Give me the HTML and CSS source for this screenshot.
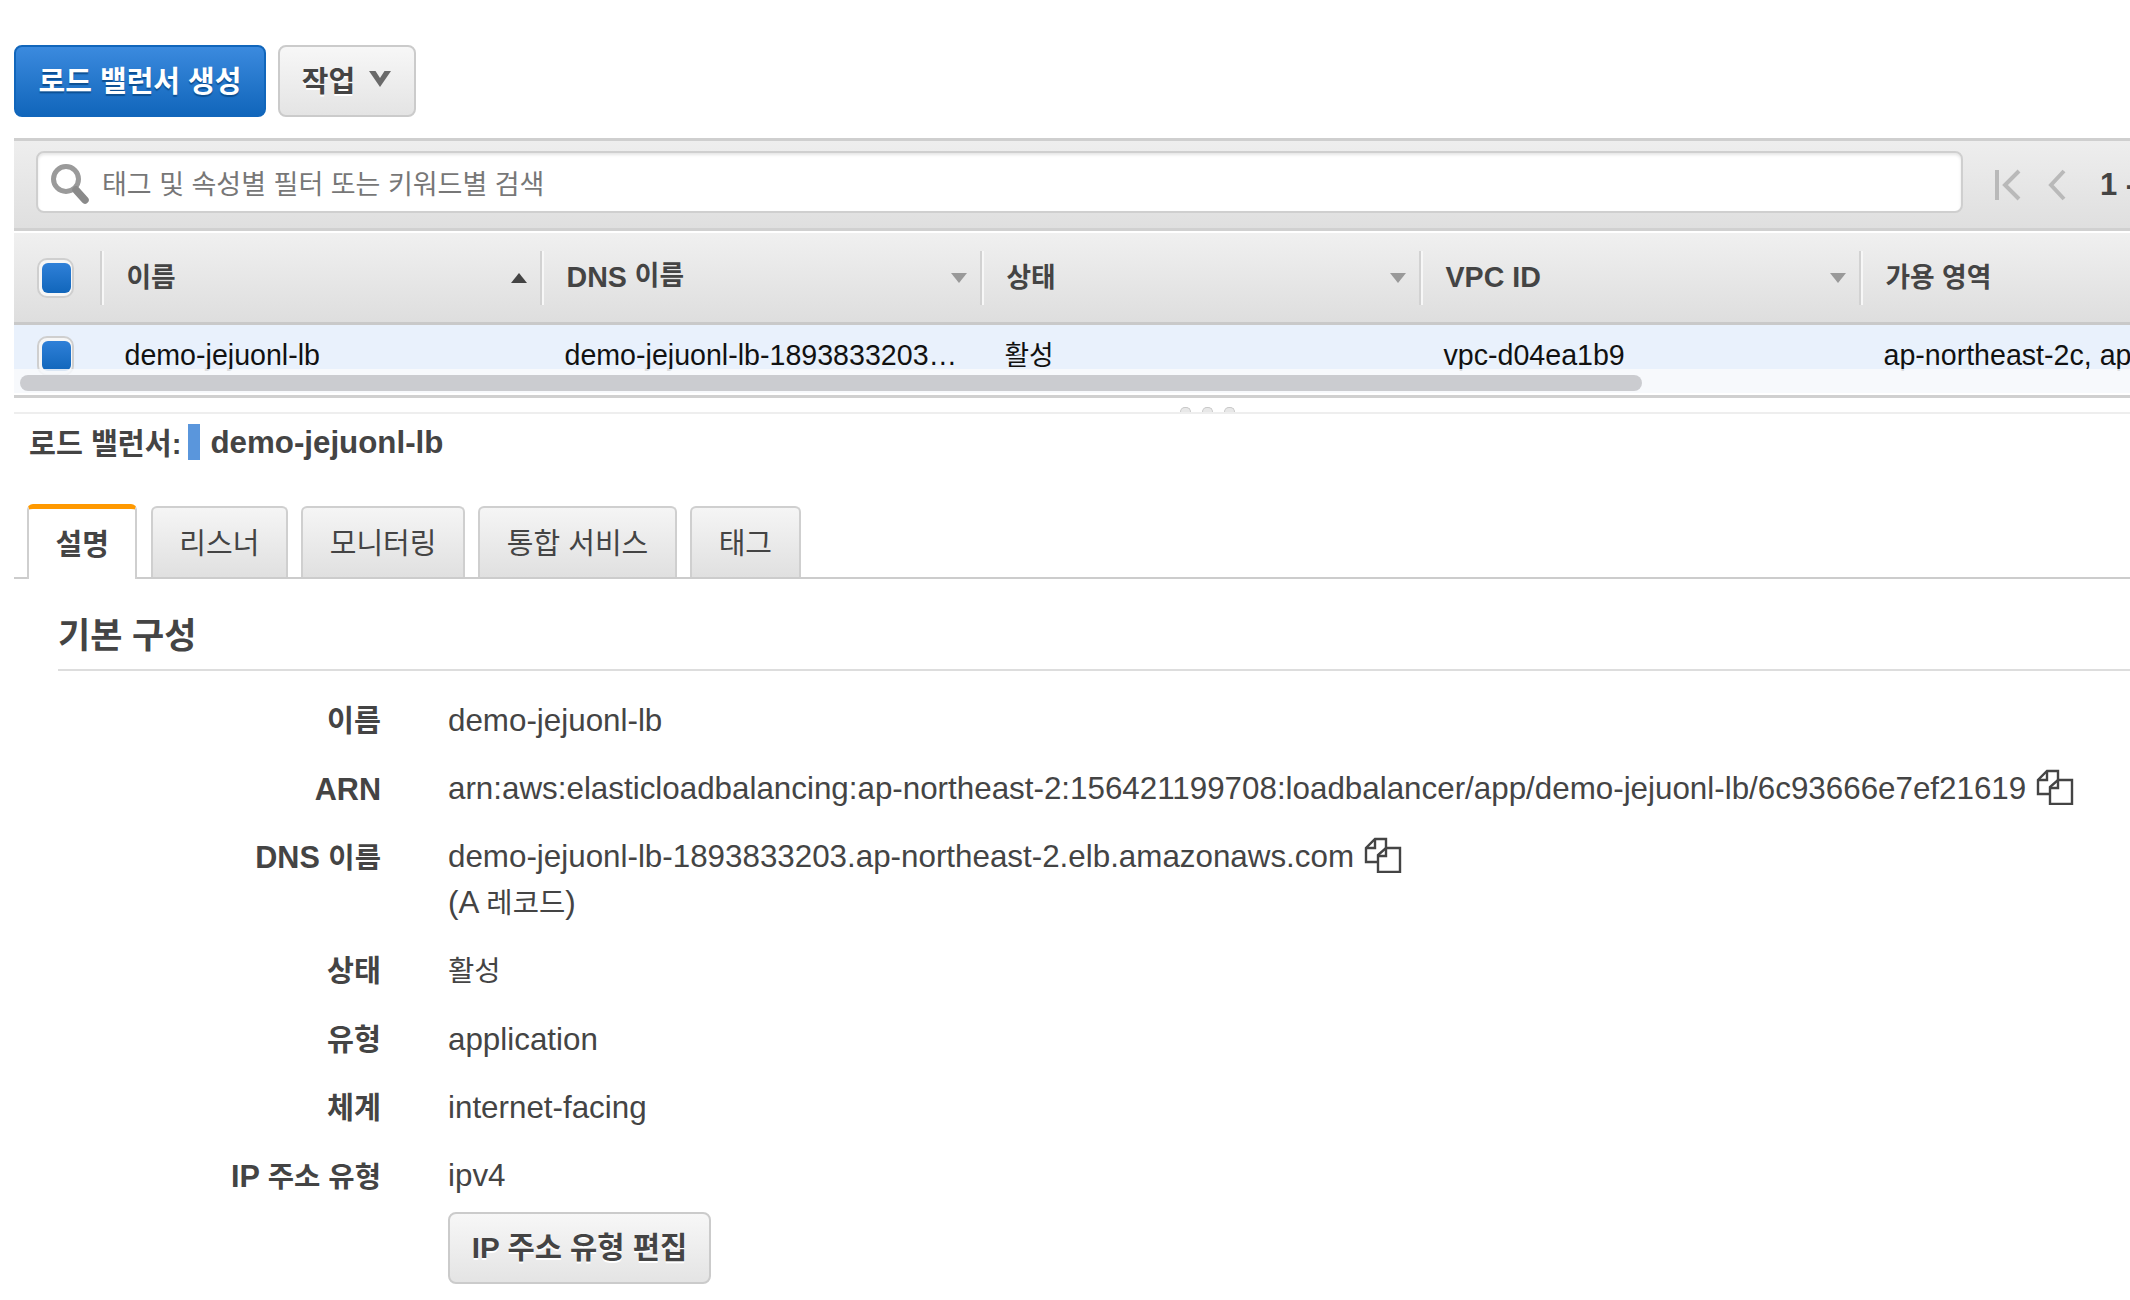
FILE: index.html
```html
<!DOCTYPE html>
<html lang="ko">
<head>
<meta charset="utf-8">
<title>로드 밸런서</title>
<link rel="stylesheet" href="styles.css">
</head>
<body>
<div class="page">
  <div class="actions">
    <button class="btn btn-primary">로드 밸런서 생성</button>
    <button class="btn btn-default btn-actions">작업
      <svg class="chev" width="24" height="18" viewBox="0 0 24 18"><path d="M1 1h6.500l4.500 7 4.500-7h6.500L12 17z" fill="#6a6a6a"/></svg>
    </button>
  </div>

  <div class="toolbar">
    <div class="search">
      <svg class="search-icon" width="40" height="42" viewBox="0 0 40 42"><circle cx="16" cy="16" r="12.5" fill="none" stroke="#9a9a9a" stroke-width="5"/><path d="M26 27l9 10" stroke="#8a8a8a" stroke-width="7.5" stroke-linecap="round"/></svg>
      <span class="placeholder">태그 및 속성별 필터 또는 키워드별 검색</span>
    </div>
    <div class="pager">
      <svg width="30" height="34" viewBox="0 0 30 34"><path d="M3 2v30" stroke="#b9b9b9" stroke-width="4"/><path d="M25 3L11 17l14 14" fill="none" stroke="#b9b9b9" stroke-width="4"/></svg>
      <svg width="20" height="34" viewBox="0 0 20 34"><path d="M16 3L3 17l13 14" fill="none" stroke="#b9b9b9" stroke-width="4"/></svg>
      <span class="page-num">1 -</span>
    </div>
  </div>

  <div class="grid">
    <div class="grid-row grid-head">
      <div class="cell-check"><span class="check"><i></i></span></div>
      <div class="cell cell-head"><span class="ko">이름</span><svg class="sort" width="16" height="10" viewBox="0 0 16 10"><path d="M8 0l8 10H0z" fill="#444"/></svg></div>
      <div class="cell cell-head"><span>DNS <span class="ko">이름</span></span><svg class="sort" width="16" height="10" viewBox="0 0 16 10"><path d="M0 0h16L8 10z" fill="#999"/></svg></div>
      <div class="cell cell-head"><span class="ko">상태</span><svg class="sort" width="16" height="10" viewBox="0 0 16 10"><path d="M0 0h16L8 10z" fill="#999"/></svg></div>
      <div class="cell cell-head"><span>VPC ID</span><svg class="sort" width="16" height="10" viewBox="0 0 16 10"><path d="M0 0h16L8 10z" fill="#999"/></svg></div>
      <div class="cell cell-head cell-last"><span class="ko">가용 영역</span></div>
    </div>
    <div class="grid-body">
      <div class="grid-row grid-data">
        <div class="cell-check"><span class="check"><i></i></span></div>
        <div class="cell">demo-jejuonl-lb</div>
        <div class="cell"><span class="ellipsis">demo-jejuonl-lb-1893833203.ap-northeast-2.elb.amazonaws.com</span></div>
        <div class="cell"><span class="ko">활성</span></div>
        <div class="cell">vpc-d04ea1b9</div>
        <div class="cell cell-last">ap-northeast-2c, ap-northeast-2a</div>
      </div>
      <div class="scrolltrack"><div class="scrollthumb"></div></div>
    </div>
  </div>

  <div class="splitter"><i></i><i></i><i></i></div>

  <div class="selected-title"><b class="ko">로드 밸런서:</b><span class="swatch"></span><b>demo-jejuonl-lb</b></div>

  <div class="tabs">
    <div class="tab tab-active">설명</div>
    <div class="tab">리스너</div>
    <div class="tab">모니터링</div>
    <div class="tab">통합 서비스</div>
    <div class="tab">태그</div>
  </div>

  <section class="details">
    <h2 class="section-title">기본 구성</h2>
    <dl class="props">
      <div class="prop"><dt class="ko">이름</dt><dd>demo-jejuonl-lb</dd></div>
      <div class="prop"><dt>ARN</dt><dd>arn:aws:elasticloadbalancing:ap-northeast-2:156421199708:loadbalancer/app/demo-jejuonl-lb/6c93666e7ef21619<svg class="copy" width="38" height="36" viewBox="0 0 38 36"><path d="M13 25H2V11L11 2h11v9" fill="none" stroke="#444" stroke-width="2.4"/><path d="M11 2v9H2" fill="none" stroke="#444" stroke-width="2.4"/><path d="M14 35V18l8-7h14v24z" fill="#fff" stroke="#444" stroke-width="2.4"/><path d="M22 11v8h-8" fill="none" stroke="#444" stroke-width="2.4"/></svg></dd></div>
      <div class="prop prop-tall"><dt>DNS <span class="ko">이름</span></dt><dd>demo-jejuonl-lb-1893833203.ap-northeast-2.elb.amazonaws.com<svg class="copy" width="38" height="36" viewBox="0 0 38 36"><path d="M13 25H2V11L11 2h11v9" fill="none" stroke="#444" stroke-width="2.4"/><path d="M11 2v9H2" fill="none" stroke="#444" stroke-width="2.4"/><path d="M14 35V18l8-7h14v24z" fill="#fff" stroke="#444" stroke-width="2.4"/><path d="M22 11v8h-8" fill="none" stroke="#444" stroke-width="2.4"/></svg><br>(A <span class="ko">레코드</span>)</dd></div>
      <div class="prop"><dt class="ko">상태</dt><dd class="ko">활성</dd></div>
      <div class="prop"><dt class="ko">유형</dt><dd>application</dd></div>
      <div class="prop"><dt class="ko">체계</dt><dd>internet-facing</dd></div>
      <div class="prop"><dt>IP <span class="ko">주소 유형</span></dt><dd>ipv4</dd></div>
    </dl>
    <button class="btn btn-default btn-edit">IP 주소 유형 편집</button>
  </section>
</div>
</body>
</html>
```

FILE: styles.css
```css
* { box-sizing: border-box; }
html, body { margin: 0; padding: 0; height: 100%; overflow: hidden; background: #fff; }
body { font-family: "Liberation Sans", "Noto Sans CJK KR", sans-serif; color: #444; font-size: 30px; }
.page { width: 2130px; height: 1300px; padding: 45px 0 0 14px; overflow: hidden; }
.ko { font-size: .935em; }

.actions { display: flex; gap: 12px; height: 72px; }
.btn { font: inherit; font-size: 29px; font-weight: 700; border-radius: 8px; padding: 0 0 4px; height: 72px; display: inline-flex; align-items: center; justify-content: center; }
.btn-primary { width: 252px; color: #fff; border: 2px solid #1166bb; background: linear-gradient(#3b8ade, #1166bb); text-shadow: 0 2px 1px #0c4f92; }
.btn-default { color: #444; border: 2px solid #cbcbcb; background: linear-gradient(#f7f7f7, #e4e4e4); text-shadow: 0 2px 0 #fff; }
.btn-actions { width: 138px; gap: 13px; }

.toolbar { margin-top: 21px; height: 93px; border-top: 3px solid #cfcfcf; border-bottom: 3px solid #d0d0d0; background: linear-gradient(#eeeeee, #dfdfdf); display: flex; align-items: center; padding: 0 0 5px 22px; margin-right: -2px; }
.search { width: 1927px; height: 62px; flex: none; border: 2px solid #cfcfcf; border-radius: 8px; background: #fff; display: flex; align-items: center; padding-left: 12px; box-shadow: inset 0 2px 3px #e6e6e6; }
.search-icon { flex: none; margin-top: 4px; }
.placeholder { margin-left: 12px; color: #777; font-size: 27px; }
.pager { display: flex; align-items: center; margin-left: 31px; gap: 24px; flex: none; padding-top: 5px; }
.page-num { font-weight: 700; color: #444; white-space: nowrap; font-size: 31px; margin-left: 8px; }

.grid { margin-top: 2px; }
.grid-row { display: grid; grid-template-columns: 88px 440px 440px 439px 440px 300px; }
.grid-head { height: 92px; background: linear-gradient(#f0f0f0, #dedede); border-bottom: 3px solid #c9c9c9; align-items: center; }
.cell-check { padding-left: 23px; display: flex; align-items: center; }
.check { width: 37px; height: 40px; border: 2px solid #cfcfcf; border-radius: 10px; background: #f6f6f6; display: flex; align-items: center; justify-content: center; }
.check i { display: block; width: 29px; height: 30px; margin-left: 1px; border-radius: 6px; background: linear-gradient(#2f80d8, #1166bb); }
.cell { font-size: 28.6px; color: #111; padding-left: 24px; white-space: nowrap; min-width: 0; }
.cell-head { height: 54px; border-left: 2px solid #f7f7f7; display: flex; align-items: center; justify-content: space-between; padding: 0 15px 0 22.5px; color: #444; font-weight: 700; box-shadow: -2px 0 0 #d2d2d2; }
.cell-head > .ko { margin-bottom: 4px; }
.cell-head span .ko { line-height: 0; vertical-align: 2px; }
.cell-last { justify-content: flex-start; }
.ellipsis { display: block; max-width: 396px; overflow: hidden; text-overflow: ellipsis; }

.grid-body { height: 73px; position: relative; overflow: hidden; border-bottom: 3px solid #d0d0d0; background: #fff; }
.grid-data { height: 44px; background: #e9f1fc; align-items: start; padding-top: 13px; }
.grid-data .check { margin-top: -2px; }
.grid-data .cell { line-height: 34px; margin-left: -1.5px; }
.scrolltrack { position: absolute; left: 0; right: 0; top: 44px; height: 24px; padding: 6px 0 0 6px; background: rgba(246, 248, 252, .88); }
.scrollthumb { width: 1622px; height: 16px; background: #cbccd0; border-radius: 8px; }

.splitter { height: 16px; border-bottom: 2px solid #eeeeee; display: flex; justify-content: center; gap: 11px; padding: 9px 0 0 270px; }
.splitter i { width: 11px; height: 5px; border: 1px solid #c8c8c8; border-bottom: 0; border-radius: 6px 6px 0 0; background: #e8e8e8; }

.selected-title { margin-top: 10px; margin-left: 15px; height: 36px; display: flex; align-items: center; font-size: 31.3px; color: #444; }
.selected-title b:first-child { margin-bottom: 2px; }
.selected-title b:last-child { margin-top: 1px; }
.swatch { width: 12px; height: 36px; background: #5a96dc; margin: 0 10px 0 7px; }

.tabs { margin-top: 44px; height: 75px; border-bottom: 2px solid #cccccc; display: flex; gap: 13.4px; padding-left: 13px; align-items: flex-end; }
.tab { height: 71px; padding: 0 26.5px 4px; border: 2px solid #cfcfcf; border-bottom: 0; border-radius: 6px 6px 0 0; background: linear-gradient(#f5f5f5, #e0e0e0); display: flex; align-items: center; font-size: 29px; color: #444; }
.tab-active { height: 75px; margin-bottom: -2px; background: #fff; font-weight: 700; border-top: 5px solid #ff9900; }

.details { padding-left: 44px; }
.section-title { margin: 0; height: 92px; padding-top: 33px; border-bottom: 2px solid #dddddd; font-size: 35px; font-weight: 700; line-height: 48px; color: #444; }
.props { margin: 0; padding-top: 26.5px; }
.prop { display: grid; grid-template-columns: 323px 1fr; column-gap: 67px; min-height: 68.4px; align-items: start; line-height: 46px; font-size: 31.35px; margin: 0; }
.prop-tall { min-height: 114px; }
dt { text-align: right; font-weight: 700; font-size: 30.6px; }
dd { margin: 0; white-space: nowrap; }
dd .ko, dd.ko { font-size: 28.6px; }
.copy { vertical-align: -6px; margin-left: 10px; }
.btn-edit { width: 263px; margin-left: 390px; margin-top: -10px; font-size: 29.6px; }
```
